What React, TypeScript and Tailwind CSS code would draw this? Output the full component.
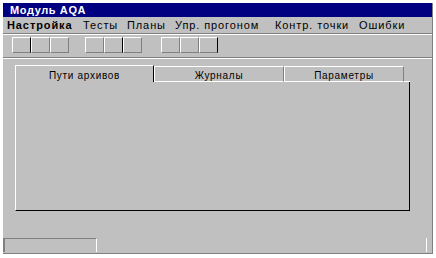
const font = { fontFamily: '"Liberation Sans", Arial, sans-serif' };

function ToolButton({ dark }: { dark?: boolean }) {
  return (
    <div
      className={`h-[16px] w-[19px] border-l border-t border-white border-b border-b-[#808080] ${
        dark ? 'border-r border-r-black' : 'border-r border-r-[#808080]'
      }`}
    />
  );
}

function ToolGroup({ dark }: { dark: number }) {
  return (
    <div className="flex">
      {[0, 1, 2].map((i) => (
        <ToolButton key={i} dark={i === dark} />
      ))}
    </div>
  );
}

const menu = [
  { label: 'Настройка', w: 'w-[76px]', bold: true },
  { label: 'Тесты', w: 'w-[44px]' },
  { label: 'Планы', w: 'w-[48px]' },
  { label: 'Упр. прогоном', w: 'w-[100px]' },
  { label: 'Контр. точки', w: 'w-[84px]' },
  { label: 'Ошибки', w: 'w-[60px]' },
];

export default function App() {
  return (
    <div className="h-[258px] w-[436px] bg-white p-[3px]" style={font}>
      <div className="flex h-[251px] w-[430px] flex-col border-b border-r border-[#808080] bg-[#c0c0c0]">
        <div className="flex h-[14px] items-center bg-[#000080] pl-[7px] text-[11px] font-bold tracking-[0.6px] text-white">
          Модуль AQA
        </div>

        <div className="flex h-[16px] items-center pl-[4px] text-[11px] tracking-[0.9px] text-black">
          {menu.map((m) => (
            <span key={m.label} className={`${m.w} ${m.bold ? 'font-bold' : ''}`}>
              {m.label}
            </span>
          ))}
        </div>

        <div className="border-b border-t border-b-white border-t-[#808080]" />

        <div className="flex h-[22px] items-start pl-[9px] pt-[2px]">
          <ToolGroup dark={0} />
          <div className="ml-[16px]">
            <ToolGroup dark={1} />
          </div>
          <div className="ml-[19px]">
            <ToolGroup dark={2} />
          </div>
        </div>

        <div className="border-b border-t border-b-white border-t-[#808080]" />

        <div className="ml-[12px] mt-[6px] w-[395px]">
          <div className="flex h-[17px] items-end text-[10px] tracking-[0.7px] text-black">
            <div className="flex h-[17px] w-[139px] justify-center border-l border-r border-t border-l-white border-r-black border-t-white pt-[2px]">
              Пути архивов
            </div>
            <div className="flex h-[16px] w-[130px] justify-center border-b border-l border-r border-t border-b-white border-l-white border-r-[#808080] border-t-white pt-[1px]">
              Журналы
            </div>
            <div className="flex h-[16px] w-[120px] justify-center border-b border-l border-r border-t border-b-white border-l-white border-r-[#808080] border-t-white pt-[1px]">
              Параметры
            </div>
            <div className="h-[1px] flex-1 bg-white" />
          </div>
          <div className="h-[129px] border-b border-l border-r border-b-black border-l-white border-r-black" />
        </div>

        <div className="mt-auto flex h-[14px] mb-[1px]">
          <div className="w-[94px] border-l-2 border-r border-t border-l-[#808080] border-r-white border-t-[#808080]" />
          <div className="w-[330px] border-r border-r-white" />
        </div>
      </div>
    </div>
  );
}
